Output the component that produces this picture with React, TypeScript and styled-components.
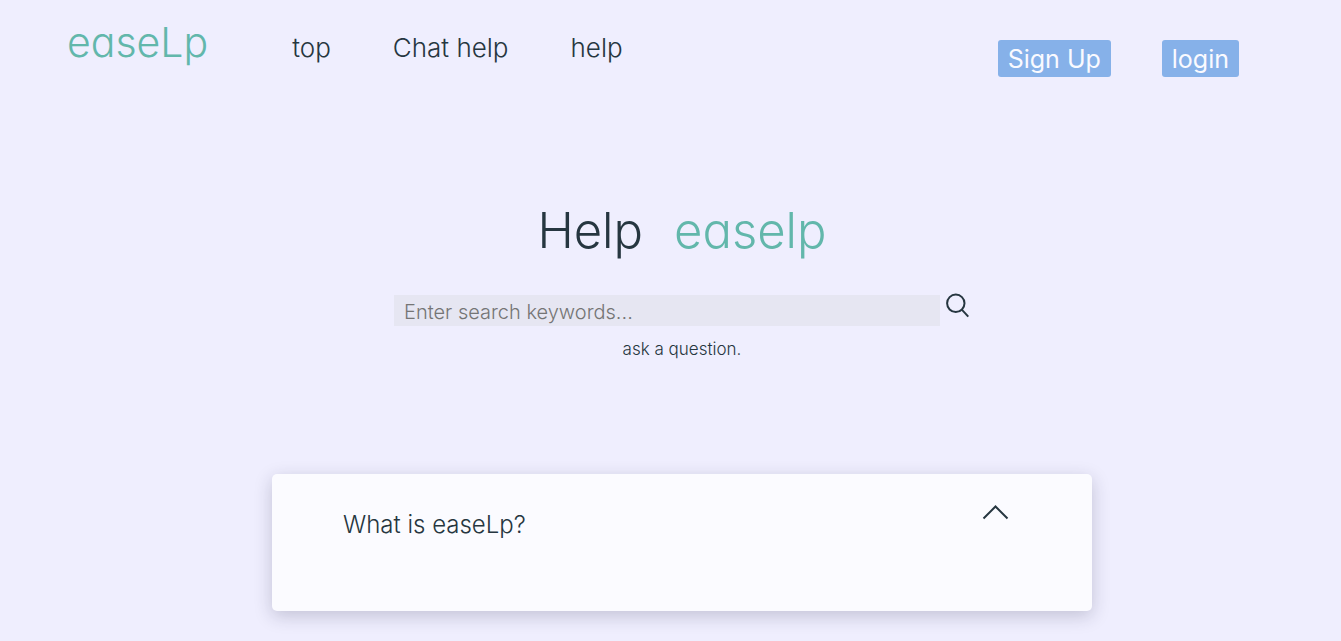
import React, { useState } from "react";
import styled, { createGlobalStyle } from "styled-components";

const GlobalStyle = createGlobalStyle`
  *, *::before, *::after { box-sizing: border-box; }
  body {
    margin: 0;
    background: #efeefe;
    color: #263640;
    font-family: Inter, "Liberation Sans", sans-serif;
    font-weight: 300;
  }
`;

const Header = styled.header`
  display: flex;
  align-items: flex-start;
  justify-content: space-between;
  padding: 16px 102px 0 67px;
`;

const Left = styled.div`
  display: flex;
  align-items: flex-start;
  gap: 84px;
`;

const Brand = styled.a`
  color: #62b7ab;
  font-size: 41px;
  line-height: 52px;
  font-feature-settings: "cv11";
  text-decoration: none;
`;

const Nav = styled.nav`
  display: flex;
  gap: 62px;
  padding-top: 16px;
`;

const NavLink = styled.a`
  color: inherit;
  font-size: 26px;
  line-height: 32px;
  text-decoration: none;
`;

const Actions = styled.div`
  display: flex;
  gap: 51px;
  padding-top: 24px;
`;

const ActionButton = styled.button`
  height: 37px;
  padding: 2px 10px 0;
  border: 0;
  border-radius: 3px;
  background: #86b1e9;
  color: #fafaff;
  font: 400 25px/35px Inter, "Liberation Sans", sans-serif;
  cursor: pointer;
`;

const Main = styled.main`
  display: flex;
  flex-direction: column;
  align-items: center;
  padding: 124px 16px 30px 39px;
`;

const Title = styled.h1`
  display: flex;
  gap: 31px;
  margin: 0;
  font-size: 49px;
  line-height: 60px;
  font-weight: 300;
  font-feature-settings: "cv11";
`;

const TitleBrand = styled.span`
  color: #62b7ab;
`;

const SearchForm = styled.form`
  display: flex;
  align-items: flex-start;
  gap: 5px;
  width: 100%;
  max-width: 576px;
  margin-top: 32px;
`;

const SearchInput = styled.input`
  flex: 1;
  min-width: 0;
  height: 31px;
  margin-top: 2px;
  padding: 2px 10px 0;
  border: 0;
  background: #e6e6f2;
  color: inherit;
  font: 300 20px/28px Inter, "Liberation Sans", sans-serif;
  &::placeholder { color: #757575; }
`;

const IconButton = styled.button`
  display: flex;
  padding: 0;
  border: 0;
  background: none;
  color: inherit;
  cursor: pointer;
`;

const AskLink = styled.a`
  margin-top: 13px;
  color: inherit;
  font-size: 17px;
  line-height: 20px;
  text-decoration: none;
`;

const Card = styled.section`
  width: 100%;
  max-width: 820px;
  min-height: 137px;
  margin-top: 115px;
  padding: 30px 83px 24px 71px;
  border-radius: 5px;
  background: #fbfbff;
  box-shadow: 0 5px 18px rgba(38, 38, 70, 0.22);
`;

const CardHead = styled.div`
  display: flex;
  align-items: flex-start;
  justify-content: space-between;
`;

const Question = styled.h2`
  margin: 5px 0 0;
  font-size: 24px;
  line-height: 32px;
  font-weight: 300;
`;

const Answer = styled.p`
  margin: 16px 0 0;
  font-size: 17px;
  line-height: 24px;
`;

export default function App() {
  const [open, setOpen] = useState(false);
  return (
    <>
      <GlobalStyle />
      <Header>
        <Left>
          <Brand href="#">easeLp</Brand>
          <Nav>
            <NavLink href="#top">top</NavLink>
            <NavLink href="#chat">Chat help</NavLink>
            <NavLink href="#help">help</NavLink>
          </Nav>
        </Left>
        <Actions>
          <ActionButton type="button">Sign Up</ActionButton>
          <ActionButton type="button">login</ActionButton>
        </Actions>
      </Header>
      <Main>
        <Title>
          <span>Help</span>
          <TitleBrand>easelp</TitleBrand>
        </Title>
        <SearchForm role="search" onSubmit={(e) => e.preventDefault()}>
          <SearchInput type="text" aria-label="Search keywords" placeholder="Enter search keywords..." />
          <IconButton type="submit" aria-label="Search">
            <svg width="25" height="25" viewBox="0 0 25 25" fill="none" stroke="currentColor" strokeWidth="2">
              <circle cx="10.8" cy="10.3" r="8.7" />
              <path d="M17 16.9 23.3 23.6" />
            </svg>
          </IconButton>
        </SearchForm>
        <AskLink href="#ask">ask a question.</AskLink>
        <Card>
          <CardHead>
            <Question>What is easeLp?</Question>
            <IconButton type="button" aria-label="Toggle answer" aria-expanded={open} onClick={() => setOpen(!open)}>
              <svg width="27" height="16" viewBox="0 0 27 16" fill="none" stroke="currentColor" strokeWidth="2">
                <path d="M1.5 14.5 13.5 2.5 25.5 14.5" />
              </svg>
            </IconButton>
          </CardHead>
          {open && <Answer>What is easeLp?</Answer>}
        </Card>
      </Main>
    </>
  );
}
